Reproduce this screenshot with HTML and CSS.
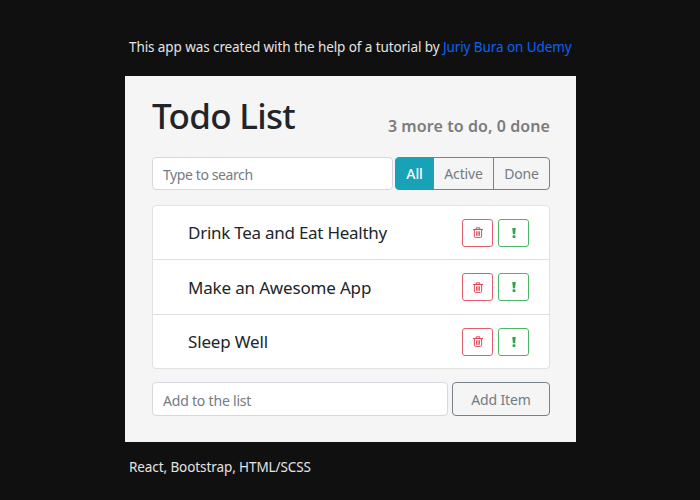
FILE: index.html
```html
<!DOCTYPE html>
<html lang="en">
<head>
<meta charset="utf-8">
<title>Todo List</title>
<link rel="stylesheet" href="styles.css">
</head>
<body>
<svg class="defs" width="0" height="0" aria-hidden="true">
  <symbol id="trash" viewBox="0 0 10 11">
    <path d="M0 2.5H10M3.2 2.5V.8H6.8V2.5M1.4 2.5V9.3Q1.4 10.4 2.5 10.4H7.5Q8.6 10.4 8.6 9.3V2.5M3.6 4.3V8.8M5 4.3V8.8M6.4 4.3V8.8" fill="none" stroke="currentColor" stroke-width=".9"/>
  </symbol>
  <symbol id="mark" viewBox="0 0 4 10">
    <path d="M.3 0H3.7L3.1 6.2H.9Z" fill="currentColor"/><rect x=".5" y="7.3" width="3" height="2.6" rx="1" fill="currentColor"/>
  </symbol>
</svg>
<p class="note top">This app was created with the help of a tutorial by <a href="#">Juriy Bura on Udemy</a></p>
<main class="card">
  <header class="head"><h1>Todo List</h1><h2>3 more to do, 0 done</h2></header>
  <div class="search">
    <input class="field" type="text" placeholder="Type to search">
    <div class="filters"><button class="on">All</button><button class="active">Active</button><button class="done">Done</button></div>
  </div>
  <ul class="list">
    <li><span>Drink Tea and Eat Healthy</span><button class="del" aria-label="Delete"><svg width="10" height="11"><use href="#trash"/></svg></button><button class="imp" aria-label="Important"><svg width="4" height="10"><use href="#mark"/></svg></button></li>
    <li><span class="wide">Make an Awesome App</span><button class="del" aria-label="Delete"><svg width="10" height="11"><use href="#trash"/></svg></button><button class="imp" aria-label="Important"><svg width="4" height="10"><use href="#mark"/></svg></button></li>
    <li><span class="wide">Sleep Well</span><button class="del" aria-label="Delete"><svg width="10" height="11"><use href="#trash"/></svg></button><button class="imp" aria-label="Important"><svg width="4" height="10"><use href="#mark"/></svg></button></li>
  </ul>
  <div class="add"><input class="field" type="text" placeholder="Add to the list"><button class="additem">Add Item</button></div>
</main>
<p class="note bottom">React, Bootstrap, HTML/SCSS</p>
</body>
</html>
```
FILE: styles.css
```css
* { box-sizing: border-box; }
body {
  margin: 0;
  width: 700px;
  height: 500px;
  overflow: hidden;
  padding: 36px 124px 0 125px;
  background: #101010;
  font-family: "Noto Sans", "Open Sans", sans-serif;
  font-size: 14px;
  color: #212529;
}
button, input { font: inherit; margin: 0; }
.defs { display: block; height: 0; }
.note { margin: 0; padding-left: 4px; line-height: 22px; font-size: 13.5px; letter-spacing: -.09px; color: #e4e4e4; white-space: nowrap; }
.note a { color: #0d62f5; text-decoration: none; }
.card { margin-top: 18px; height: 366px; padding: 12px 26px 0 27px; background: #f5f5f5; }
.head { display: flex; justify-content: space-between; height: 69px; white-space: nowrap; }
h1 { margin: 0; font-size: 35px; line-height: 56px; font-weight: 500; letter-spacing: -.7px; }
h2 { margin: 26px 0 0; font-size: 16px; line-height: 24px; font-weight: 600; letter-spacing: .08px; color: #7c7c7c; }
.search { display: flex; gap: 2px; height: 33px; }
.field { min-width: 0; flex: 1; height: 100%; padding: 2px 10px 0; border: 1px solid #d3d9df; border-radius: 4px; background: #fff; letter-spacing: -.2px; }
.field::placeholder { color: #737b83; opacity: 1; }
.search .field { padding-top: 1px; letter-spacing: -.4px; }
.filters { display: flex; width: 155px; }
.filters button { padding: 0; border: 1px solid #79818a; background: transparent; color: #737b83; letter-spacing: -.15px; }
.filters .on { width: 39px; background: #17a2b8; border-color: #17a2b8; border-radius: 4px 0 0 4px; color: #fff; font-weight: 500; }
.filters .active { width: 61px; margin-left: -1px; }
.filters .done { width: 57px; margin-left: -1px; border-radius: 0 4px 4px 0; }
.list { display: grid; grid-template-rows: 53px 55px 54px; list-style: none; margin: 15px 0 13px; padding: 0; background: #fff; border: 1px solid #e1e1e1; border-radius: 4px; }
.list li { display: flex; align-items: center; padding: 0 20px 0 35px; font-size: 17px; letter-spacing: -.26px; }
.list li + li { border-top: 1px solid #dfdfdf; }
.list span { flex: 1; white-space: nowrap; }
.list .wide { letter-spacing: -.17px; }
.list button { display: flex; align-items: center; justify-content: center; width: 31px; height: 28px; padding: 0; border: 1px solid; border-radius: 3px; background: #fff; }
.list .del { color: #dc3545; border-color: #e35d6a; margin-right: 5px; }
.list .imp { color: #28a745; border-color: #4fb667; }
.add { display: flex; gap: 4px; height: 34px; }
.additem { width: 98px; padding: 1px 0 0; border: 1px solid #79818a; border-radius: 4px; background: transparent; color: #737b83; letter-spacing: -.15px; }
.bottom { margin-top: 14px; }
```
